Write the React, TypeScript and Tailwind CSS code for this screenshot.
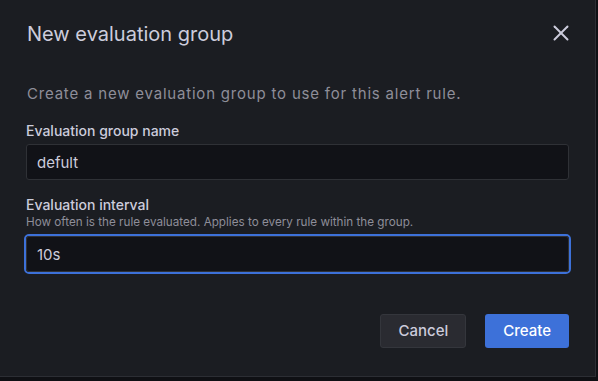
import { X } from "lucide-react";

// ─── Shared styles ─────────────────────────────────────────────────────────────

const cls = {
  label: "block text-[14px] leading-[18px] font-medium text-[#ccccdc]",
  help: "block text-[11.7px] leading-[16px] text-[#8e8e99]",
  input:
    "w-full h-9 px-[10px] rounded-[3px] bg-[#111217] border border-[#2f3136] text-[15px] text-[#ccccdc] outline-none",
};

function Field({ label, help, children }: { label: string; help?: string; children: React.ReactNode }) {
  return (
    <div>
      <label className={cls.label}>{label}</label>
      {help && <p className={cls.help}>{help}</p>}
      {children}
    </div>
  );
}

export default function App() {
  return (
    <div className="w-[598px] h-[381px] bg-[#0f1014] overflow-hidden" style={{ fontFamily: "Inter, 'Noto Sans', sans-serif" }}>
      <div className="w-[596px] h-[377px] bg-[#1b1d22] border-r border-b border-[#2c2e34] flex flex-col">
        {/* Header */}
        <div className="flex items-center justify-between pl-[27px] pr-[21px] mt-[22px] h-[24px] mb-[22px]">
          <h2 className="text-[20px] leading-[24px] font-normal text-[#ccccdc]">New evaluation group</h2>
          <button type="button" className="-mt-[3px] text-[#ccccdc]">
            <X className="w-[26px] h-[26px]" strokeWidth={1.8} />
          </button>
        </div>

        {/* Body */}
        <div className="px-[26px] pt-[16px]">
          <p className="text-[15px] leading-[20px] tracking-[0.8px] text-[#8e8e99] pl-[1px]">
            Create a new evaluation group to use for this alert rule.
          </p>

          <div className="mt-[18px]">
            <Field label="Evaluation group name">
              <div className="mt-[4px]">
                <input className={cls.input} defaultValue="defult" readOnly />
              </div>
            </Field>
          </div>

          <div className="mt-[16px]">
            <Field label="Evaluation interval" help="How often is the rule evaluated. Applies to every rule within the group.">
              <div className="mt-[4px] -mx-[2px] rounded-[5px] border-2 border-[#3d71d9]">
                <input className={`${cls.input} rounded-[3px]`} defaultValue="10s" readOnly />
              </div>
            </Field>
          </div>
        </div>

        {/* Footer */}
        <div className="flex justify-end gap-[19px] px-[26px] mt-[40px]">
          <button
            type="button"
            className="h-[34px] px-[17px] rounded-[3px] bg-[#2a2b31] border border-[#34363c] text-[15px] font-medium text-[#ccccdc]"
          >
            Cancel
          </button>
          <button type="button" className="h-[34px] px-[18px] rounded-[3px] bg-[#3d71d9] text-[15px] font-medium text-white">
            Create
          </button>
        </div>
      </div>
    </div>
  );
}
